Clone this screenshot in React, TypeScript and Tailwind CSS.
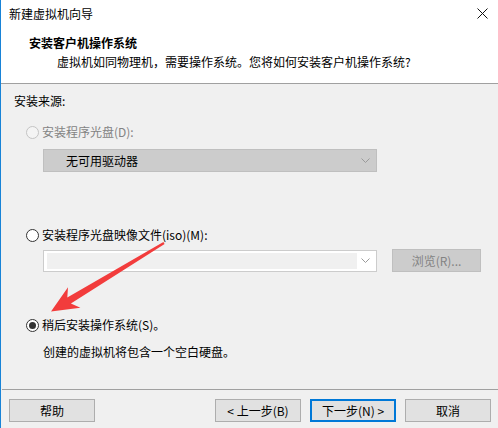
import React from "react";

const font = { fontFamily: '"Noto Sans CJK SC", "Noto Sans", sans-serif' };

function Radio({ state }: { state: "disabled" | "off" | "on" }) {
  if (state === "disabled") {
    return <div className="w-[13px] h-[13px] rounded-full border border-[#c4c4c4] bg-[#f4f4f4] shrink-0" />;
  }
  return (
    <div className="w-[13px] h-[13px] rounded-full border border-[#333333] bg-white shrink-0 flex items-center justify-center">
      {state === "on" && <div className="w-[7px] h-[7px] rounded-full bg-[#333333]" />}
    </div>
  );
}

function Chevron({ color }: { color: string }) {
  return (
    <svg width="9" height="5" viewBox="0 0 9 5" className="shrink-0">
      <polyline points="0.5,0.5 4.5,4.5 8.5,0.5" fill="none" stroke={color} strokeWidth="1" />
    </svg>
  );
}

function Btn({ children, primary }: { children: React.ReactNode; primary?: boolean }) {
  return (
    <div
      className={
        "w-[86px] h-[23px] bg-[#e1e1e1] flex items-center justify-center text-[12px] leading-4 text-black " +
        (primary ? "border-2 border-[#0078d7]" : "border border-[#adadad]")
      }
    >
      {children}
    </div>
  );
}

export default function App() {
  return (
    <div className="relative w-[498px] h-[428px] bg-[#f0f0f0] border-l border-[#1883d7] overflow-hidden text-black" style={font}>
      {/* Title + header */}
      <div className="bg-white">
        <div className="h-[27px] flex items-center justify-between pl-[8px] pr-[10px]">
          <span className="text-[12px] leading-4">新建虚拟机向导</span>
          <svg width="11" height="11" viewBox="0 0 11 11">
            <line x1="0.5" y1="0.5" x2="10.5" y2="10.5" stroke="#111" strokeWidth="1" />
            <line x1="10.5" y1="0.5" x2="0.5" y2="10.5" stroke="#111" strokeWidth="1" />
          </svg>
        </div>
        <div className="h-[56px] pt-[8px] pl-[28px]">
          <div className="text-[12px] leading-4 font-bold">安装客户机操作系统</div>
          <div className="text-[12px] leading-4 mt-[3px] pl-[28px]">虚拟机如同物理机，需要操作系统。您将如何安装客户机操作系统?</div>
        </div>
      </div>
      <div className="h-px bg-[#a0a0a0]" />

      {/* Body */}
      <div className="pl-[13px] pt-[9px]">
        <div className="text-[12px] leading-4">安装来源:</div>
      </div>

      <div className="flex items-center h-4 mt-[15px] pl-[25px] gap-[3px]">
        <Radio state="disabled" />
        <span className="text-[12px] leading-4 text-[#838383]">安装程序光盘(D):</span>
      </div>
      <div className="ml-[42px] mt-[9px] w-[334px] h-[23px] bg-[#cccccc] border border-[#bfbfbf] flex items-center justify-between pl-[22px] pr-[6px]">
        <span className="text-[12px] leading-4">无可用驱动器</span>
        <Chevron color="#9a9a9a" />
      </div>

      <div className="flex items-center h-4 mt-[55px] pl-[25px] gap-[3px]">
        <Radio state="off" />
        <span className="text-[12px] leading-4">安装程序光盘映像文件(iso)(M):</span>
      </div>
      <div className="flex items-center mt-[6px] ml-[42px] gap-[15px]">
        <div className="w-[334px] h-[22px] bg-white border border-[#cccccc] flex items-center pr-[6px]">
          <div className="ml-[3px] w-[310px] h-[16px] bg-[#f0f0f0]" />
          <div className="flex-1" />
          <Chevron color="#9a9a9a" />
        </div>
        <div className="w-[89px] h-[23px] bg-[#cccccc] border border-[#bfbfbf] flex items-center justify-center text-[12px] leading-4 text-[#838383]">
          浏览(R)...
        </div>
      </div>

      <div className="flex items-center h-4 mt-[45px] pl-[25px] gap-[3px]">
        <Radio state="on" />
        <span className="text-[12px] leading-4">稍后安装操作系统(S)。</span>
      </div>
      <div className="mt-[11px] pl-[42px] text-[12px] leading-4">创建的虚拟机将包含一个空白硬盘。</div>

      <div className="mt-[29px] ml-[1px] h-px bg-[#a0a0a0]" />

      <div className="flex items-center mt-[9px] pl-[8px]">
        <Btn>帮助</Btn>
        <div className="flex-1" />
        <div className="flex items-center gap-[9px] pr-[7px]">
          <Btn>&lt; 上一步(B)</Btn>
          <Btn primary>下一步(N) &gt;</Btn>
          <Btn>取消</Btn>
        </div>
      </div>

      {/* Annotation arrow */}
      <svg className="absolute left-0 top-0 pointer-events-none" width="498" height="428" viewBox="-1 0 498 428">
        <polygon
          points="162.6,244 68.9,303.6 78.4,307.8 49,311.5 66,287.2 65.3,297.6 161.4,242"
          fill="#f23c3c"
        />
      </svg>
    </div>
  );
}
